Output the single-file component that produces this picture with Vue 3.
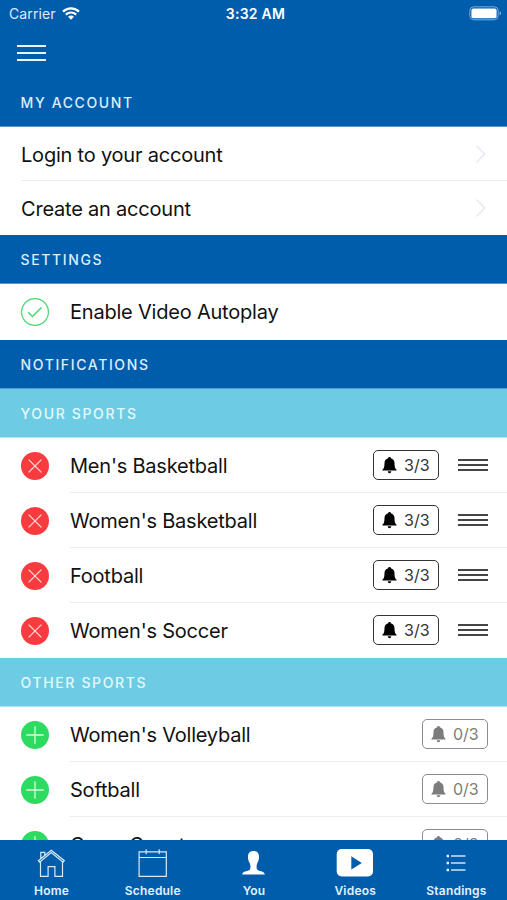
<script setup>
const yourSports = ["Men's Basketball", "Women's Basketball", 'Football', "Women's Soccer"]
const otherSports = ["Women's Volleyball", 'Softball', 'Cross Country']
</script>

<template>
  <div class="screen">
    <header class="top">
      <div class="status">
        <div class="carrier">
          <span>Carrier</span>
          <svg width="18" height="13" viewBox="0 0 18 13" fill="none" stroke="#fff" stroke-width="2.2">
            <path d="M1 4.6C5.6.2 12.4.2 17 4.6M3.8 7.6c3-2.8 7.4-2.8 10.4 0" />
            <path d="M9 12.7 6 9.8c1.7-1.6 4.3-1.6 6 0z" fill="#fff" stroke="none" />
          </svg>
        </div>
        <div class="time">3:32 AM</div>
        <svg class="battery" width="33" height="15" viewBox="0 0 33 15">
          <rect x=".8" y=".8" width="28.4" height="13" rx="4" fill="none" stroke="#7facd9" stroke-width="1" />
          <rect x="2.4" y="2.4" width="25.2" height="9.8" rx="2" fill="#fff" />
          <path d="M30.6 5.2q1.5.7 1.5 2.1t-1.5 2.1z" fill="#7facd9" />
        </svg>
      </div>
      <div class="menu"><i></i><i></i><i></i></div>
    </header>

    <main>
      <h2>MY ACCOUNT</h2>
      <div class="row link login">
        <span class="label">Login to your account</span>
        <svg width="12" height="20" viewBox="0 0 12 20" fill="none" stroke="#e9e8fa" stroke-width="1.6"><path d="m1.5 1.5 8 8.5-8 8.5" /></svg>
      </div>
      <div class="row link">
        <span class="label">Create an account</span>
        <svg width="12" height="20" viewBox="0 0 12 20" fill="none" stroke="#e9e8f2" stroke-width="1.6"><path d="m1.5 1.5 8 8.5-8 8.5" /></svg>
      </div>
      <h2>SETTINGS</h2>
      <div class="row setting">
        <svg class="mark" viewBox="0 0 28 28" fill="none" stroke="#4bd570">
          <circle cx="14" cy="14" r="13.4" stroke-width="1.2" />
          <path d="m7.3 14.4 4.1 4.1 9.1-9" stroke-width="1.5" />
        </svg>
        <span class="label">Enable Video Autoplay</span>
      </div>
      <h2>NOTIFICATIONS</h2>
      <h2 class="sub">YOUR SPORTS</h2>
      <div v-for="name in yourSports" :key="name" class="row item">
        <svg class="mark" viewBox="0 0 28 28">
          <circle cx="14" cy="14" r="14" fill="#f83b3f" />
          <path d="m7.6 7.6 12.8 12.8m0-12.8L7.6 20.4" stroke="#ffd9d9" stroke-width="1.3" />
        </svg>
        <div class="body">
          <span class="label">{{ name }}</span>
          <span class="badge">
            <svg width="15" height="17" viewBox="0 0 15 17" fill="currentColor"><path d="M6.2 1.2a1.3 1.3 0 0 1 2.6 0c2.5.6 3.6 2.4 3.7 4.8.1 4 .4 5.5 2.1 6.7v.9H.4v-.9c1.7-1.2 2-2.7 2.1-6.7.1-2.4 1.2-4.2 3.7-4.8zM5.7 14.3h3.6q-.2 2-1.8 2t-1.8-2z" /></svg>
            <span>3/3</span>
          </span>
          <span class="handle"><i></i><i></i><i></i></span>
        </div>
      </div>
      <h2 class="sub">OTHER SPORTS</h2>
      <div v-for="name in otherSports" :key="name" class="row item">
        <svg class="mark" viewBox="0 0 28 28">
          <circle cx="14" cy="14" r="14" fill="#2edb61" />
          <path d="M5.3 14h17.4M14 5.3v17.4" stroke="#d3ffdc" stroke-width="1.3" />
        </svg>
        <div class="body">
          <span class="label">{{ name }}</span>
          <span class="badge muted">
            <svg width="15" height="17" viewBox="0 0 15 17" fill="currentColor"><path d="M6.2 1.2a1.3 1.3 0 0 1 2.6 0c2.5.6 3.6 2.4 3.7 4.8.1 4 .4 5.5 2.1 6.7v.9H.4v-.9c1.7-1.2 2-2.7 2.1-6.7.1-2.4 1.2-4.2 3.7-4.8zM5.7 14.3h3.6q-.2 2-1.8 2t-1.8-2z" /></svg>
            <span>0/3</span>
          </span>
        </div>
      </div>
    </main>

    <nav>
      <div class="tab">
        <svg width="30" height="32" viewBox="0 0 30 32" fill="none" stroke="#d5eaff" stroke-width="1.2">
          <path d="M3.5 14.5v14.9h7.6v-9.8h6.8v9.8h7.6V14.5" />
          <path d="m1.3 13.7 13-10.5 13 10.5-1.3 1.5-11.700-9.600-11.700 9.600zM3.800 11.500V5.300h4v2.900" />
        </svg>
        <span>Home</span>
      </div>
      <div class="tab">
        <svg width="30" height="32" viewBox="0 0 30 32" fill="none" stroke="#d5eaff" stroke-width="1.2">
          <path d="M1.1 4.800h27.200v24.500H1.100zM1.100 10.500h27.200M8.200 2.300v5M21.200 2.300v5" />
        </svg>
        <span>Schedule</span>
      </div>
      <div class="tab">
        <svg width="30" height="32" viewBox="0 0 30 32" fill="#fff">
          <path d="M14.500 4c-4.200 0-5.700 2.900-5.500 6.400.1 2 .6 3.900 1.900 6 .6 1.700.7 4.500.1 6-1.200 1.700-7.600 1.400-7.900 5.100h22.800c-.3-3.700-6.700-3.400-7.900-5.100-.6-1.500-.5-4.300.1-6 1.300-2.100 1.800-4 1.900-6C20.200 6.900 18.700 4 14.500 4z" />
        </svg>
        <span>You</span>
      </div>
      <div class="tab">
        <svg width="38" height="32" viewBox="0 0 38 32">
          <rect x=".7" y="2" width="36.3" height="27.5" rx="5" fill="#fff" />
          <path d="M15.3 9.300v13.200l10.500-6.600z" fill="#005dab" />
        </svg>
        <span>Videos</span>
      </div>
      <div class="tab">
        <svg width="30" height="32" viewBox="0 0 30 32" fill="none" stroke="#c9e2fb">
          <path d="M10 9h14.500M10 16h14.500M10 23h14.500" stroke-width="1.4" />
          <path d="M5.600 9H8M5.600 16H8M5.600 23H8" stroke="#e5f3ff" stroke-width="2.4" />
        </svg>
        <span>Standings</span>
      </div>
    </nav>
  </div>
</template>

<style>
body { margin: 0; overflow: hidden; }
</style>

<style scoped>
.screen {
  width: 507px;
  height: 900px;
  display: flex;
  flex-direction: column;
  overflow: hidden;
  background: #fff;
  font-family: Inter, "Liberation Sans", sans-serif;
  color: #111;
}
svg { display: block; flex: none; }
.top { height: 78px; flex: none; background: #005dab; }
.status {
  height: 27px;
  display: grid;
  grid-template-columns: 1fr auto 1fr;
  align-items: center;
  padding: 0 5px 0 9px;
  color: #fff;
  font-size: 14px;
  line-height: 27px;
}
.carrier { display: flex; align-items: center; gap: 6px; color: #dcecfb; letter-spacing: .1px; }
.time { font-weight: 600; letter-spacing: .25px; }
.battery { justify-self: end; }
.menu { width: 29px; padding: 17px 0 0 17px; display: flex; flex-direction: column; gap: 5px; }
.menu i { height: 2px; background: #e8f4ff; }
.menu { padding-top: 18px; }
main { flex: 1; min-height: 0; overflow: hidden; }
h2 {
  box-sizing: border-box;
  height: 49px;
  margin: 0;
  padding-left: 20.5px;
  border-bottom: 1px solid #5a95cb;
  background: #005dab;
  color: #dcedff;
  font-size: 14px;
  font-weight: 500;
  line-height: 50px;
  letter-spacing: 1.63px;
}
.sub { background: #6dcce3; color: #e4f9ff; border-bottom-color: #b0e4f0; }
.row { box-sizing: border-box; display: flex; align-items: center; height: 55px; padding-left: 21px; }
.label { font-size: 20px; line-height: 55px; white-space: nowrap; letter-spacing: -.21px; }
.link { height: 54px; margin-left: 21px; padding: 0 20px 0 0; justify-content: space-between; }
.link .label { line-height: 52px; padding-top: 2px; }
.login { border-bottom: 1px solid #ececec; }
.setting { height: 56px; }
.mark { width: 28px; height: 28px; margin-right: 21px; }
.body {
  box-sizing: border-box;
  flex: 1;
  height: 55px;
  display: flex;
  align-items: center;
  padding-right: 19px;
  border-bottom: 1px solid #ededed;
}
.body .label { flex: 1; line-height: 52px; padding-top: 2px; }
.item:has(+ h2) .body { border-color: transparent; }
.badge {
  box-sizing: border-box;
  width: 66px;
  height: 30px;
  display: flex;
  align-items: center;
  padding-left: 8px;
  gap: 7px;
  border: 1.5px solid #333;
  border-radius: 5px;
  font-size: 16px;
  color: #000;
}
.badge span { color: #333; }
.muted, .muted span { color: #7c7c7c; }
.muted { border-color: #8c8c8c; }
.handle { width: 30px; margin-left: 19px; display: flex; flex-direction: column; gap: 3px; }
.handle i { height: 2px; background: #444; }
nav { height: 60px; flex: none; display: flex; box-sizing: border-box; padding: 1px 0 0 1px; background: #005dab; }
.tab { flex: 1; padding-top: 6px; display: flex; flex-direction: column; align-items: center; }
.tab span { margin-top: 3px; color: #e2f1ff; font-size: 12px; font-weight: 600; line-height: 17px; letter-spacing: .2px; }
</style>
